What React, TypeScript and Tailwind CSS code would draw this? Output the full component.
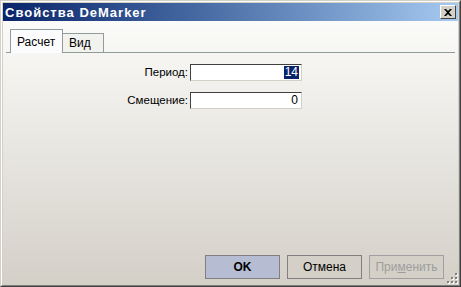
import React from "react";

export default function App() {
  const font = { fontFamily: '"Liberation Sans", "DejaVu Sans", sans-serif' };
  return (
    <div className="w-[461px] h-[287px] bg-[#d4d0c8] relative overflow-hidden" style={font}>
      <div className="absolute inset-0 border border-t-[#d4d0c8] border-l-[#d4d0c8] border-r-[#404040] border-b-[#404040]">
        <div className="w-full h-full border border-t-white border-l-white border-r-[#808080] border-b-[#808080] p-[1px] flex flex-col">
          {/* title bar */}
          <div className="h-[18px] flex items-center justify-between bg-gradient-to-r from-[#0a246a] to-[#a6caf0] pl-[2px] pr-[2px]">
            <span className="text-white font-bold text-[13px] leading-none tracking-[1px]">Свойства DeMarker</span>
            <div className="w-[16px] h-[14px] bg-[#d4d0c8] border border-t-white border-l-white border-r-[#404040] border-b-[#404040] flex items-center justify-center">
              <svg width="8" height="7" viewBox="0 0 8 7">
                <path d="M0 0h2l2 2 2-2h2L5 3.5 8 7H6L4 5 2 7H0l3-3.5z" fill="#000" />
              </svg>
            </div>
          </div>
          {/* body */}
          <div className="flex-1 flex flex-col bg-gradient-to-b from-[#fbfbf9] to-[#d4d0c8] pt-[7px] px-[3px]">
            <div className="flex items-end h-[24px] pl-[4px]">
              <div className="h-[24px] w-[53px] bg-[#fcfcfe] border border-[#919b9c] border-b-0 flex items-center pl-[6px] text-[12px] text-black relative -mb-[1px] z-10">
                Расчет
              </div>
              <div className="h-[19px] w-[41px] bg-[#f2f2ee] border border-[#919b9c] border-l-0 border-b-0 flex items-center pl-[6px] text-[12px] text-black">
                Вид
              </div>
            </div>
            <div className="flex-1 border-t border-[#919b9c] flex flex-col">
              <div className="flex flex-col gap-[11px] pt-[11px]">
                <div className="flex items-center">
                  <div className="w-[184px] text-right pr-[2px] text-[11.5px] text-black">Период:</div>
                  <div className="w-[112px] h-[17px] bg-white border border-t-[#404040] border-l-[#404040] border-r-[#d4d0c8] border-b-[#d4d0c8] flex items-center justify-end pr-[2px]">
                    <span className="bg-[#0a246a] text-white text-[12px] leading-[13px] px-[1px]">14</span>
                  </div>
                </div>
                <div className="flex items-center">
                  <div className="w-[184px] text-right pr-[2px] text-[11.5px] text-black">Смещение:</div>
                  <div className="w-[112px] h-[17px] bg-white border border-t-[#404040] border-l-[#404040] border-r-[#d4d0c8] border-b-[#d4d0c8] flex items-center justify-end pr-[3px]">
                    <span className="text-black text-[12px] leading-[13px]">0</span>
                  </div>
                </div>
              </div>
              <div className="flex-1" />
              <div className="flex justify-end gap-[7px] pr-[11px] pb-[5px]">
                <button className="w-[75px] h-[24px] bg-[#b6bdd2] border border-[#808080] text-[12px] font-bold text-black">OK</button>
                <button className="w-[75px] h-[24px] bg-[#d4d0c8] border border-[#808080] text-[12px] text-black">Отмена</button>
                <button className="w-[75px] h-[24px] bg-[#d4d0c8] border border-[#a0a0a0] text-[12px] text-[#9d9d9d]">
                  При<span className="underline">м</span>енить
                </button>
              </div>
            </div>
          </div>
        </div>
      </div>
      <svg className="absolute right-[3px] bottom-[3px]" width="11" height="11" viewBox="0 0 11 11">
        {[[8,0],[8,4],[4,4],[8,8],[4,8],[0,8]].map(([x,y],i)=>(
          <g key={i}><rect x={x+1} y={y+1} width="2" height="2" fill="#fff"/><rect x={x} y={y} width="2" height="2" fill="#808080"/></g>
        ))}
      </svg>
    </div>
  );
}
